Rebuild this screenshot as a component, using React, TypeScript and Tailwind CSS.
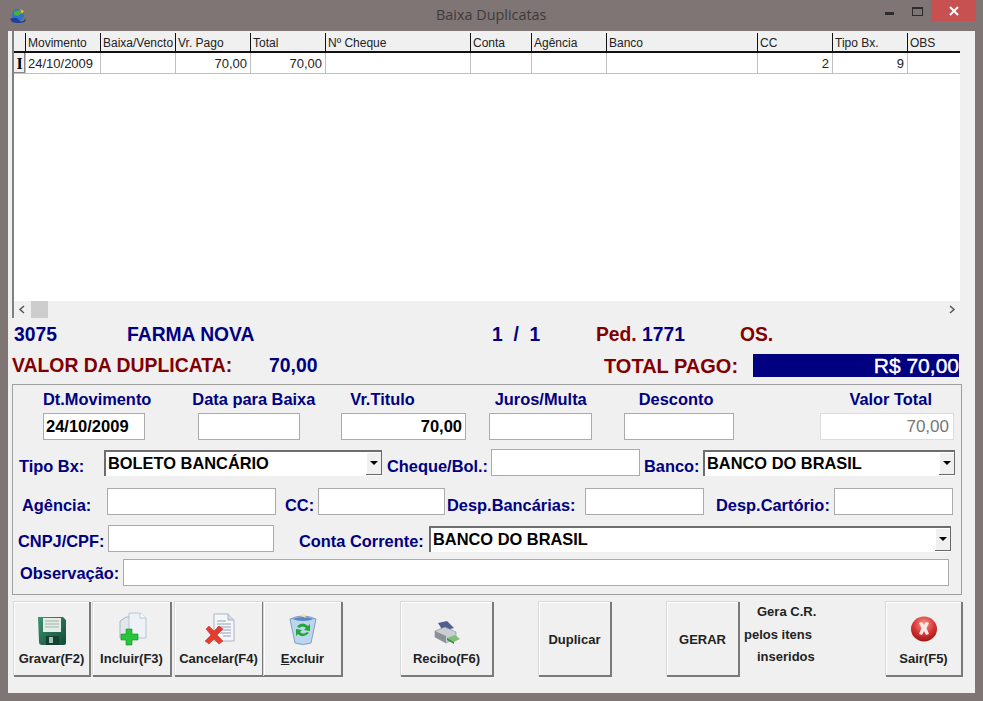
import React from 'react';

const columns = [
  { title: 'Movimento', width: 'w-[75px]', value: '24/10/2009', align: 'text-left' },
  { title: 'Baixa/Vencto', width: 'w-[75px]', value: '', align: 'text-left' },
  { title: 'Vr. Pago', width: 'w-[75px]', value: '70,00', align: 'text-right' },
  { title: 'Total', width: 'w-[75px]', value: '70,00', align: 'text-right' },
  { title: 'Nº Cheque', width: 'w-[145px]', value: '', align: 'text-left' },
  { title: 'Conta', width: 'w-[61px]', value: '', align: 'text-left' },
  { title: 'Agência', width: 'w-[75px]', value: '', align: 'text-left' },
  { title: 'Banco', width: 'w-[151px]', value: '', align: 'text-left' },
  { title: 'CC', width: 'w-[75px]', value: '2', align: 'text-right' },
  { title: 'Tipo Bx.', width: 'w-[75px]', value: '9', align: 'text-right' },
  { title: 'OBS', width: 'w-[53px]', value: '', align: 'text-left' },
];

const Label = ({ className = '', children }: { className?: string; children: React.ReactNode }) => (
  <span className={`shrink-0 whitespace-nowrap text-[16.4px] font-bold leading-[18px] text-[#000080] ${className}`}>
    {children}
  </span>
);

const Input = ({ className = 'font-bold text-black', width, children }: { className?: string; width: string; children?: React.ReactNode }) => (
  <div className={`flex h-[27px] shrink-0 items-center justify-end border border-[#ababab] bg-white pr-[3px] pl-[2px] text-[16.5px] ${width} ${className}`}>
    {children}
  </div>
);

const Combo = ({ className = '', text }: { className?: string; text: string }) => (
  <div className={`flex h-[26px] shrink-0 items-start justify-between border-t-2 border-l-2 border-[#6d6d6d] bg-white pl-[2px] ${className}`}>
    <span className="whitespace-nowrap text-[16.4px] font-bold leading-[23px] text-black">{text}</span>
    <span className="flex h-[23px] w-[16px] items-center justify-center border-r border-b border-[#696969] bg-[#f0f0f0] shadow-[inset_1px_1px_0_#fff]">
      <span className="h-0 w-0 border-x-[4px] border-t-[4px] border-x-transparent border-t-black" />
    </span>
  </div>
);

const ToolButton = ({ className = '', icon, children }: { className?: string; icon?: React.ReactNode; children: React.ReactNode }) => (
  <button className={`flex h-[75px] shrink-0 flex-col items-center justify-center border-r-2 border-b-2 border-[#7a7a7a] bg-[#f0f0f0] text-[13px] font-bold text-[#222] shadow-[inset_1px_1px_0_#fff,-1px_-1px_0_#d8d8d8] ${className}`}>
    {icon && <span className="mb-[5px] flex h-[36px] items-end justify-center">{icon}</span>}
    <span className="whitespace-nowrap leading-[16px]">{children}</span>
  </button>
);

const AppIcon = () => (
  <svg width="18" height="16" viewBox="0 0 18 16">
    <circle cx="9" cy="7" r="6" fill="#2f6fd0" />
    <path d="M5 4 L10 2 L13 5 L9 8 L5 7 Z" fill="#4fae3a" />
    <path d="M11 1 L15 3 L13 6 Z" fill="#f0c020" />
    <path d="M1 11 Q7 8 10 12 T17 10 L16 14 Q9 16 3 14 Z" fill="#1c3f9a" />
  </svg>
);

const FloppyIcon = () => (
  <svg width="30" height="30" viewBox="0 0 30 30">
    <defs>
      <linearGradient id="floppyBody" x1="0" y1="0" x2="1" y2="1">
        <stop offset="0" stopColor="#3b9472" />
        <stop offset="1" stopColor="#134a37" />
      </linearGradient>
    </defs>
    <path d="M1 1 H26 L29 4 V27 Q29 29 27 29 H5 Q2 29 2 26 Z" fill="url(#floppyBody)" />
    <rect x="6" y="2" width="18" height="14" fill="#e4ece8" />
    <path d="M8 5 H22 M8 8 H22 M8 11 H22" stroke="#9fb3aa" strokeWidth="1" />
    <rect x="9" y="20" width="13" height="9" fill="#174034" />
    <rect x="12" y="21" width="4" height="6" fill="#9cc4b2" />
  </svg>
);

const AddDocIcon = () => (
  <svg width="30" height="34" viewBox="0 0 30 34">
    <path d="M3 9 L9 5 H16 V26 H3 Z" fill="#dfe6ee" stroke="#a9b6c6" />
    <path d="M12 1 H23 L29 6 V26 H12 Z" fill="#eef2f7" stroke="#b8c4d2" />
    <path d="M23 1 V6 H29" fill="#fff" stroke="#b8c4d2" />
    <path d="M9 17 H15 V22 H21 V28 H15 V33 H9 V28 H4 V22 H9 Z" fill="#28c43c" stroke="#138a26" strokeWidth="0.6" />
  </svg>
);

const CancelDocIcon = () => (
  <svg width="32" height="33" viewBox="0 0 32 33">
    <path d="M11 1 H25 L31 7 V28 H11 Z" fill="#f4f6fa" stroke="#aab4c2" />
    <path d="M25 1 V7 H31" fill="#d4dbe6" stroke="#aab4c2" />
    <path d="M14 8 H23 M14 11 H28 M14 14 H28 M14 17 H28 M17 20 H28 M20 23 H28" stroke="#93a2b8" strokeWidth="1" />
    <path d="M3 16 L6 13 L11 18 L16 13 L20 16 L14 22 L20 28 L16 31 L11 26 L6 31 L2 28 L8 22 Z" fill="#e43d30" stroke="#b5281c" strokeWidth="0.5" />
  </svg>
);

const BinIcon = () => (
  <svg width="30" height="33" viewBox="0 0 30 33">
    <path d="M2 6 Q15 0 28 6 L23 30 Q15 33 7 30 Z" fill="#bcd6ee" stroke="#7f9fc4" />
    <path d="M4 6 Q15 2 26 6 Q15 10 4 6 Z" fill="#5b86c4" />
    <path d="M13 3 L16 0 L18 5 Z" fill="#f3e6a8" />
    <path d="M9 13 Q15 8 20 13 L22 11 L22 18 L16 17 L18 15 Q15 12 11 15 Z" fill="#22a638" />
    <path d="M21 20 Q15 26 10 21 L8 23 L8 16 L14 17 L12 19 Q15 22 19 19 Z" fill="#22a638" />
  </svg>
);

const PrinterIcon = () => (
  <svg width="28" height="24" viewBox="0 0 28 24" className="mb-[1px]">
    <path d="M5 2 L14 0 L21 7 L10 10 Z" fill="#4f5f92" />
    <path d="M2 10 L12 6 L23 11 L23 17 L13 22 L2 16 Z" fill="#c9cdd4" stroke="#83888f" strokeWidth="0.6" />
    <path d="M2 10 L13 15 V22 L2 16 Z" fill="#8c9097" />
    <path d="M14 17 L21 21 L27 18 L22 14 Z" fill="#7fbf7a" />
    <path d="M14 17 L21 21 V23 L14 19 Z" fill="#3f8a3c" />
  </svg>
);

const ExitIcon = () => (
  <svg width="28" height="26" viewBox="0 0 28 26" className="mb-[4px]">
    <defs>
      <radialGradient id="exitBall" cx="0.5" cy="0.3" r="0.75">
        <stop offset="0" stopColor="#f29a90" />
        <stop offset="0.55" stopColor="#d93232" />
        <stop offset="1" stopColor="#8f1414" />
      </radialGradient>
    </defs>
    <ellipse cx="14" cy="13" rx="13" ry="12.5" fill="url(#exitBall)" />
    <path d="M9 7 L12 6 L14 9 L16 6 L19 7 L16.5 12 L19 18 L16 19 L14 15 L12 19 L9 18 L11.5 12 Z" fill="#f6e9e6" />
  </svg>
);

export default function App() {
  return (
    <div className="flex h-[701px] w-[983px] flex-col overflow-hidden bg-[#7f7574] font-['Liberation_Sans',Arial,sans-serif]">
      {/* Title bar */}
      <div className="relative flex h-[31px] shrink-0 items-center">
        <span className="ml-[9px]">
          <AppIcon />
        </span>
        <span className="absolute top-[6px] left-[436px] font-['Open_Sans',sans-serif] text-[14.4px] leading-[18px] text-[#3c3c3c]">
          Baixa Duplicatas
        </span>
        <div className="absolute top-0 right-[7px] flex h-[21px] items-start">
          <span className="mt-[12px] mr-[18px] h-[3px] w-[9px] bg-[#2c2c2c]" />
          <span className="mt-[7px] mr-[8px] h-[9px] w-[11px] border border-t-2 border-[#2c2c2c]" />
          <span className="flex h-[21px] w-[45px] items-center justify-center bg-[#c75050] text-white">
            <svg width="10" height="10" viewBox="0 0 10 10">
              <path d="M1 1 L9 9 M9 1 L1 9" stroke="#fff" strokeWidth="2" />
            </svg>
          </span>
        </div>
      </div>

      {/* Client area */}
      <div className="ml-[8px] mr-[8px] h-[662px] shrink-0 bg-[#f0f0f0]">
        {/* Grid */}
        <div className="ml-[4px] flex h-[287px] w-[948px] flex-col overflow-hidden border-l-2 border-[#808080] pt-[2px]">
          <div className="flex h-[20px] shrink-0 border-b-2 border-[#111] text-[12px] leading-[20px] text-[#222]">
            <div className="w-[12px] shrink-0 border-r border-[#111]" />
            {columns.map((col) => (
              <div key={col.title} className={`${col.width} shrink-0 overflow-hidden whitespace-nowrap border-r border-[#111] pl-[2px]`}>
                {col.title}
              </div>
            ))}
          </div>
          <div className="flex h-[21px] shrink-0 border-b border-[#c0c0c0] bg-white text-[13px] leading-[21px] text-[#222]">
            <div className="flex w-[12px] shrink-0 items-center justify-center border-r border-[#c0c0c0] bg-[#f0f0f0] font-['Liberation_Serif',serif] text-[16px] font-bold text-black shadow-[inset_-1px_-1px_0_#888]">
              I
            </div>
            {columns.map((col) => (
              <div key={col.title} className={`${col.width} shrink-0 border-r border-[#c0c0c0] pr-[3px] pl-[2px] ${col.align}`}>
                {col.value}
              </div>
            ))}
          </div>
          <div className="flex-1 bg-white" />
          <div className="flex h-[17px] shrink-0 items-center justify-between bg-[#f0f0f0] pr-[3px]">
            <div className="flex h-full items-center">
              <svg width="17" height="9" viewBox="0 0 17 9">
                <path d="M10 1 L6 4.5 L10 8" fill="none" stroke="#555" strokeWidth="1.5" />
              </svg>
              <span className="h-full w-[17px] bg-[#cdcdcd]" />
            </div>
            <svg width="10" height="9" viewBox="0 0 10 9">
              <path d="M3 1 L7 4.5 L3 8" fill="none" stroke="#555" strokeWidth="1.5" />
            </svg>
          </div>
        </div>

        {/* Summary lines */}
        <div className="flex h-[34px] items-center text-[19.3px] font-bold text-[#000080]">
          <span className="ml-[6px] w-[113px]">3075</span>
          <span className="w-[365px] whitespace-nowrap">FARMA NOVA</span>
          <span className="w-[104px] whitespace-pre">1  /  1</span>
          <span className="w-[144px] whitespace-nowrap">
            <span className="text-[#800000]">Ped.</span> 1771
          </span>
          <span className="text-[#800000]">OS.</span>
        </div>
        <div className="flex h-[28px] items-center text-[19.4px] font-bold whitespace-nowrap">
          <span className="ml-[4px] w-[257px] text-[#800000]">VALOR DA DUPLICATA:</span>
          <span className="w-[335px] text-[#000080]">70,00</span>
          <span className="w-[149px] text-[20px] text-[#800000]">TOTAL PAGO:</span>
          <span className="-mt-[1px] h-[23px] w-[206px] bg-[#000080] text-right text-[21px] leading-[23px] font-normal text-white [-webkit-text-stroke:0.4px_white]">
            R$ 70,00
          </span>
        </div>

        {/* Form */}
        <div className="mt-[4px] ml-[4px] h-[211px] w-[950px] border border-[#a0a0a0] pt-[4px]">
          <div className="flex h-[19px] items-center">
            <Label className="ml-[30px]">Dt.Movimento</Label>
            <Label className="ml-[41px]">Data para Baixa</Label>
            <Label className="ml-[35px]">Vr.Titulo</Label>
            <Label className="ml-[80px]">Juros/Multa</Label>
            <Label className="ml-[52px]">Desconto</Label>
            <Label className="ml-[136px]">Valor Total</Label>
          </div>
          <div className="mt-[5px] flex">
            <Input width="ml-[30px] w-[102px] justify-start">24/10/2009</Input>
            <Input width="ml-[53px] w-[102px]" />
            <Input width="ml-[41px] w-[125px]">70,00</Input>
            <Input width="ml-[23px] w-[103px]" />
            <Input width="ml-[32px] w-[110px]" />
            <Input width="ml-[86px] w-[134px]" className="border-[#dcdcdc] !pr-[4px] !text-[17px] text-[#777]">70,00</Input>
          </div>
          <div className="mt-[9px] flex items-end">
            <Label className="mb-[1px] ml-[6px] w-[85px]">Tipo Bx:</Label>
            <Combo className="w-[278px]" text="BOLETO BANCÁRIO" />
            <Label className="mb-[1px] ml-[5px] w-[104px]">Cheque/Bol.:</Label>
            <Input width="w-[149px]" />
            <Label className="mb-[1px] ml-[4px] w-[59px]">Banco:</Label>
            <Combo className="w-[252px]" text="BANCO DO BRASIL" />
          </div>
          <div className="mt-[12px] flex items-end">
            <Label className="mb-[1px] ml-[9px] w-[85px]">Agência:</Label>
            <Input width="w-[169px]" />
            <Label className="mb-[1px] ml-[9px] w-[33px]">CC:</Label>
            <Input width="w-[127px]" />
            <Label className="mb-[1px] ml-[2px] w-[138px]">Desp.Bancárias:</Label>
            <Input width="w-[119px]" />
            <Label className="mb-[1px] ml-[12px] w-[118px]">Desp.Cartório:</Label>
            <Input width="w-[119px]" />
          </div>
          <div className="mt-[10px] flex items-end">
            <Label className="mb-[2px] ml-[5px] w-[90px]">CNPJ/CPF:</Label>
            <Input width="w-[166px]" />
            <Label className="mb-[2px] ml-[25px] w-[130px]">Conta Corrente:</Label>
            <Combo className="w-[522px]" text="BANCO DO BRASIL" />
          </div>
          <div className="mt-[7px] flex items-center">
            <Label className="ml-[7px] w-[103px]">Observação:</Label>
            <Input width="w-[826px]" />
          </div>
        </div>

        {/* Toolbar */}
        <div className="mt-[7px] ml-[5px] flex">
          <ToolButton className="ml-[1px] w-[77px]" icon={<FloppyIcon />}>Gravar(F2)</ToolButton>
          <ToolButton className="ml-[2px] w-[79px]" icon={<AddDocIcon />}>Incluir(F3)</ToolButton>
          <ToolButton className="ml-[3px] w-[89px]" icon={<CancelDocIcon />}>Cancelar(F4)</ToolButton>
          <ToolButton className="w-[79px]" icon={<BinIcon />}>
            <span className="underline">E</span>xcluir
          </ToolButton>
          <ToolButton className="ml-[58px] w-[93px]" icon={<PrinterIcon />}>Recibo(F6)</ToolButton>
          <ToolButton className="ml-[45px] w-[73px] pt-[3px]">Duplicar</ToolButton>
          <ToolButton className="ml-[55px] w-[73px] pt-[3px]">GERAR</ToolButton>
          <div className="-mt-[1px] ml-[4px] flex w-[142px] shrink-0 flex-col text-[13px] font-bold leading-[22.5px] text-[#222]">
            <span className="ml-[13px]">Gera C.R.</span>
            <span>pelos itens</span>
            <span className="ml-[13px]">inseridos</span>
          </div>
          <ToolButton className="w-[77px]" icon={<ExitIcon />}>Sair(F5)</ToolButton>
        </div>
      </div>
    </div>
  );
}
